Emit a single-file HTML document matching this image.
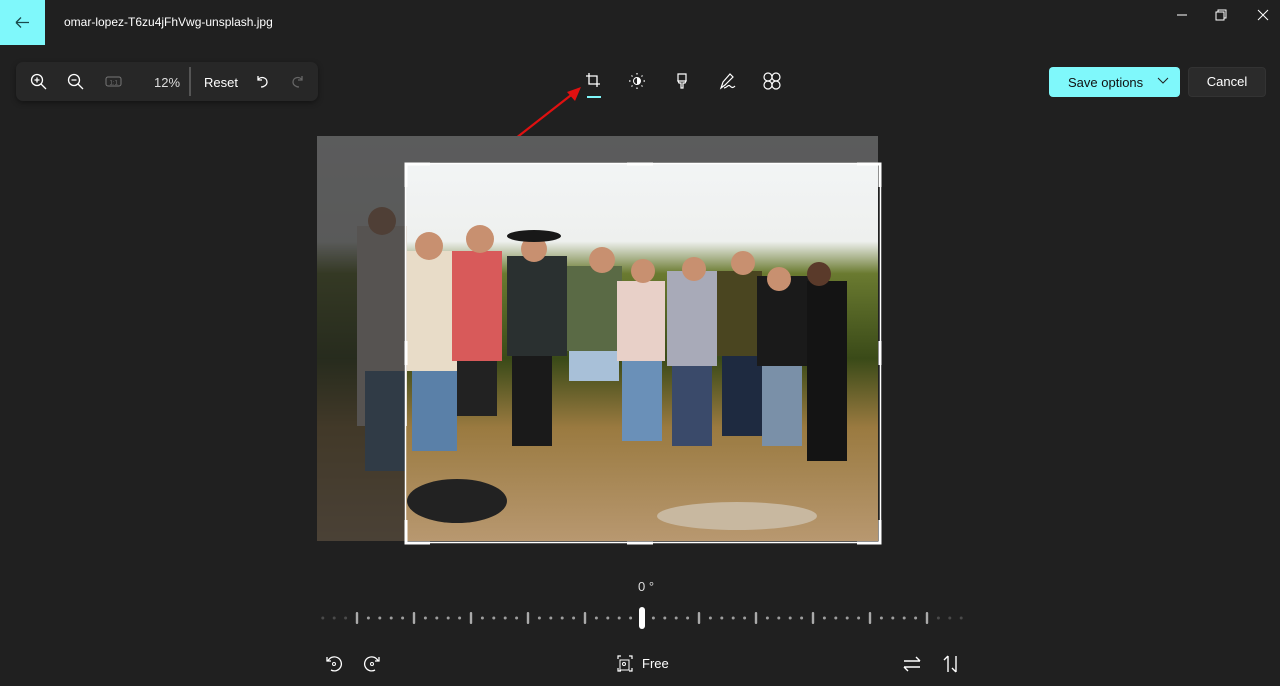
<!DOCTYPE html>
<html><head><meta charset="utf-8"><style>
*{margin:0;padding:0;box-sizing:border-box}
body{width:1280px;height:686px;background:#202020;font-family:"Liberation Sans","Segoe UI",sans-serif;color:#fff;position:relative;overflow:hidden}
.abs{position:absolute}
.back{left:0;top:0;width:45px;height:45px;background:#7ff8fb}
.title{left:64px;top:15px;font-size:12px;color:#fff}
.tb{left:16px;top:62px;width:302px;height:39px;background:#272727;border-radius:7px;box-shadow:0 2px 6px rgba(0,0,0,.4)}
.save{left:1049px;top:67px;width:131px;height:30px;background:#7ff8fb;border-radius:4px;color:#111;font-size:13px}
.cancel{left:1188px;top:67px;width:78px;height:30px;background:#2b2b2b;border:1px solid #333;border-radius:4px;font-size:13px;text-align:center;line-height:28px}
</style></head><body>
<div class="abs back"><svg width="45" height="45"><path d="M16 22.5h13M16 22.5l5-5M16 22.5l5 5" stroke="#1a4a4c" stroke-width="1.3" fill="none"/></svg></div>
<div class="abs title">omar-lopez-T6zu4jFhVwg-unsplash.jpg</div>
<svg class="abs" style="left:1170px;top:8px" width="110" height="16"><path d="M7 7h10" stroke="#fff"/><rect x="46" y="4" width="8" height="8" fill="none" stroke="#fff"/><path d="M48 4v-2h8v8h-2" stroke="#fff" fill="none"/><path d="M88 2l10 10M98 2l-10 10" stroke="#fff"/></svg>

<div class="abs tb">
<svg class="abs" style="left:14px;top:11px" width="20" height="20"><circle cx="7" cy="7" r="5.5" stroke="#fff" fill="none" stroke-width="1.3"/><path d="M11 11l5 5M4.5 7h5M7 4.5v5" stroke="#fff" stroke-width="1.3"/></svg>
<svg class="abs" style="left:51px;top:11px" width="20" height="20"><circle cx="7" cy="7" r="5.5" stroke="#fff" fill="none" stroke-width="1.3"/><path d="M11 11l5 5M4.5 7h5" stroke="#fff" stroke-width="1.3"/></svg>
<svg class="abs" style="left:89px;top:13px" width="18" height="14"><rect x="1" y="2" width="15" height="9" rx="2" stroke="#777" fill="none"/><text x="4.5" y="9.5" font-size="6" fill="#777" font-family="Liberation Sans">1:1</text></svg>
<div class="abs" style="left:138px;top:13px;font-size:13px;color:#ddd">12%</div>
<div class="abs" style="left:173px;top:5px;width:2px;height:29px;background:#555"></div>
<div class="abs" style="left:188px;top:13px;font-size:13px">Reset</div>
<svg class="abs" style="left:238px;top:11px" width="16" height="16"><path d="M4 3v4h4M4 7c2-4 9-3 9 2 0 3-3 5-6 5" stroke="#fff" fill="none" stroke-width="1.3"/></svg>
<svg class="abs" style="left:274px;top:11px" width="16" height="16"><path d="M12 3v4h-4M12 7c-2-4-9-3-9 2 0 3 3 5 6 5" stroke="#666" fill="none" stroke-width="1.3"/></svg>
</div>

<svg class="abs" style="left:580px;top:70px" width="210" height="30"><path d="M9 3v11h11M6 6h11v11" stroke="#fff" fill="none" stroke-width="1.3"/><path d="M7 27h14" stroke="#7ff8fb" stroke-width="2"/>
<circle cx="57" cy="11" r="3.5" stroke="#fff" fill="none"/><path d="M57 7.5a3.5 3.5 0 0 1 0 7z" fill="#fff"/><g stroke="#fff" stroke-width="1.2"><path d="M57 3v1.5M57 17.5v1.5M49 11h1.5M63.5 11h1.5M51.5 5.5l1 1M61.5 15.5l1 1M62.5 5.5l-1 1M52.5 15.5l-1 1"/></g>
<path d="M98 4h8v7h-8zM98 11h8l-1 2h-2v5h-2v-5h-2z" stroke="#fff" fill="none" stroke-width="1.2"/>
<path d="M141 18l2-6 7-8 3 3-8 8-4 3zM144 18c3 0 4-4 6-2s3 2 5 0" stroke="#fff" fill="none" stroke-width="1.2"/>
<g stroke="#fff" fill="none" stroke-width="1.2"><circle cx="188" cy="7" r="4"/><circle cx="196" cy="7" r="4"/><circle cx="188" cy="15" r="4"/><circle cx="196" cy="15" r="4"/></g></svg>
<svg class="abs" style="left:505px;top:84px" width="80" height="62"><path d="M6 58L70 8" stroke="#e01010" stroke-width="2.2"/><path d="M76 3L62 8l8 9z" fill="#e01010"/></svg>

<div class="abs save"><span style="position:absolute;left:19px;top:8px">Save options</span><svg class="abs" style="left:108px;top:10px" width="12" height="8"><path d="M1 1l5 5 5-5" stroke="#222" fill="none"/></svg></div>
<div class="abs cancel">Cancel</div>

<svg class="abs" style="left:317px;top:136px" width="566" height="410">
<defs>
<linearGradient id="g1" x1="0" y1="0" x2="0" y2="1"><stop offset="0" stop-color="#f4f6f8"/><stop offset=".26" stop-color="#eef0ee"/><stop offset=".34" stop-color="#6a7a30"/><stop offset=".55" stop-color="#3a4a18"/><stop offset=".72" stop-color="#9a7a40"/><stop offset="1" stop-color="#b89870"/></linearGradient>
</defs>
<rect x="0" y="0" width="561" height="405" fill="url(#g1)"/>
<g>
<rect x="90" y="115" width="54" height="120" fill="#e8dcc8"/><rect x="95" y="235" width="45" height="80" fill="#5a80a8"/>
<rect x="135" y="115" width="50" height="110" fill="#d85a5a"/><rect x="140" y="225" width="40" height="55" fill="#222"/>
<rect x="190" y="120" width="60" height="100" fill="#2a3030"/><rect x="195" y="220" width="40" height="90" fill="#1a1a1a"/>
<rect x="250" y="130" width="55" height="85" fill="#5a6a45"/><rect x="252" y="215" width="50" height="30" fill="#a8c0d8"/>
<rect x="300" y="145" width="48" height="80" fill="#e8d0c8"/><rect x="305" y="225" width="40" height="80" fill="#6a90b8"/>
<rect x="350" y="135" width="50" height="95" fill="#a8aab8"/><rect x="355" y="230" width="40" height="80" fill="#3a4a6a"/>
<rect x="400" y="135" width="45" height="85" fill="#4a4520"/><rect x="405" y="220" width="40" height="80" fill="#1e2a40"/>
<rect x="440" y="140" width="55" height="90" fill="#1a1a1a"/><rect x="445" y="230" width="40" height="80" fill="#7a90a8"/>
<rect x="490" y="145" width="40" height="180" fill="#141414"/>
<g fill="#c89070"><circle cx="112" cy="110" r="14"/><circle cx="163" cy="103" r="14"/><circle cx="217" cy="113" r="13"/><circle cx="285" cy="124" r="13"/><circle cx="326" cy="135" r="12"/><circle cx="377" cy="133" r="12"/><circle cx="426" cy="127" r="12"/><circle cx="462" cy="143" r="12"/><circle cx="502" cy="138" r="12" fill="#5a3a2a"/></g>
<ellipse cx="217" cy="100" rx="27" ry="6" fill="#181818"/>
<path d="M40 90h50v200H40z" fill="#e0d8d0"/><circle cx="65" cy="85" r="14" fill="#c89070"/><rect x="48" y="235" width="40" height="100" fill="#5a80a8"/>
<ellipse cx="140" cy="365" rx="50" ry="22" fill="#222"/><ellipse cx="420" cy="380" rx="80" ry="14" fill="#c8b8a0"/>
</g>
<rect x="0" y="0" width="88" height="405" fill="rgba(32,32,32,.72)"/>
<rect x="88" y="0" width="473" height="27" fill="rgba(32,32,32,.72)"/>
<rect x="88.5" y="27.5" width="475" height="379" fill="none" stroke="#fff" stroke-width="1.5"/>
<g stroke="#fff" stroke-width="3" fill="none"><path d="M89 51V28h24M540 28h23v23M563 384v23h-23M113 407H89v-23"/><path d="M310 28h26M310 407h26M89 205v24M563 205v24"/></g>
</svg>

<div class="abs" style="left:638px;top:579px;font-size:13px;color:#ddd">0 °</div>
<svg class="abs" style="left:315px;top:606px" width="660" height="26" id="ticks"></svg>
<script>
(function(){var s='';
for(var i=-3;i<=53;i++){var x=357-315+i*11.4;
if(i==25){s+='<rect x="'+(x-3)+'" y="1" width="6" height="22" rx="3" fill="#fff"/>';continue;}
var op=(i<0||i>50)?0.25:0.75;
if(i%5==0&&i>=0&&i<=50)s+='<rect x="'+(x-1.2)+'" y="6" width="2.4" height="12" rx="1" fill="#aaa"/>';
else s+='<circle cx="'+x+'" cy="12" r="1.5" fill="rgba(200,200,200,'+op+')"/>';}
document.getElementById('ticks').innerHTML=s;})();
</script>

<svg class="abs" style="left:322px;top:652px" width="65" height="24"><path d="M6 9a7 7 0 1 1 3 9M5 5v4h4" stroke="#fff" fill="none" stroke-width="1.3"/><circle cx="12" cy="12" r="1.5" stroke="#fff" fill="none"/><path d="M56 9a7 7 0 1 0-3 9M57 5v4h-4" stroke="#fff" fill="none" stroke-width="1.3"/><circle cx="50" cy="12" r="1.5" stroke="#fff" fill="none"/></svg>
<svg class="abs" style="left:616px;top:654px" width="20" height="20"><path d="M5 2H2v3M2 14v3h3M13 2h3v3M16 14v3h-3" stroke="#fff" fill="none" stroke-width="1.2"/><rect x="4" y="6" width="9" height="10" stroke="#fff" fill="none"/><circle cx="8" cy="10" r="1.5" stroke="#fff" fill="none"/></svg>
<div class="abs" style="left:642px;top:656px;font-size:13px">Free</div>
<svg class="abs" style="left:900px;top:652px" width="66" height="24"><path d="M4 9h16M16 5l4 4M20 15H4M8 19l-4-4" stroke="#fff" fill="none" stroke-width="1.4"/><path d="M48 20V4M44 8l4-4M56 4v16M52 16l4 4" stroke="#fff" fill="none" stroke-width="1.4"/></svg>
</body></html>
